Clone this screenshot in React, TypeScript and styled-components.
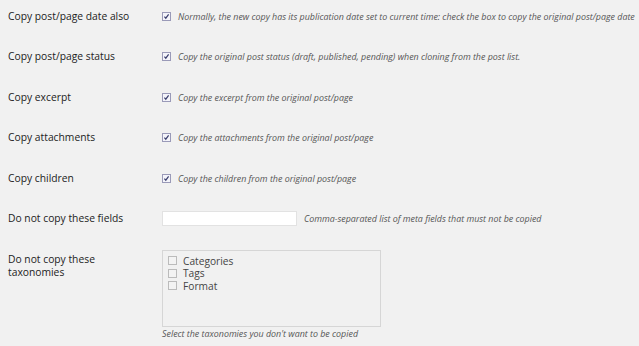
import styled, { createGlobalStyle } from "styled-components";

const GlobalStyle = createGlobalStyle`
  html, body {
    margin: 0;
    padding: 0;
    background: #f1f1f1;
  }
  body {
    font-family: "Open Sans", "DejaVu Sans", sans-serif;
    color: #222;
  }
`;

const Form = styled.div`
  padding: 9.5px 0 0 8px;
  width: 631px;
  height: 336.5px;
  overflow: hidden;
`;

const Row = styled.div<{ $tall?: boolean }>`
  display: flex;
  align-items: flex-start;
  height: ${(p) => (p.$tall ? "auto" : "40.6px")};
`;

const Label = styled.div`
  width: 154px;
  flex: none;
  font-size: 10.3px;
  line-height: 13px;
  color: #222;
`;

const Field = styled.div`
  display: flex;
  align-items: center;
  gap: 7px;
  height: 13px;
`;

const Box = styled.span<{ $checked?: boolean }>`
  display: inline-flex;
  align-items: center;
  justify-content: center;
  width: 9px;
  height: 9px;
  box-sizing: border-box;
  border: 1px solid ${(p) => (p.$checked ? "#9a9ab8" : "#bbb")};
  background: ${(p) => (p.$checked ? "#f4f4fa" : "#f3f3f3")};
  flex: none;
`;

const Desc = styled.span`
  font-style: italic;
  font-size: 8.9px;
  line-height: 13px;
  color: #555;
  white-space: nowrap;
`;

const TextInput = styled.div`
  width: 135px;
  height: 15px;
  box-sizing: border-box;
  background: #fff;
  border: 1px solid #e2e2e2;
`;

const FieldCol = styled.div`
  display: flex;
  flex-direction: column;
  margin-top: -3.5px;
`;

const TaxBox = styled.div`
  width: 219px;
  height: 77px;
  box-sizing: border-box;
  border: 1px solid #d6d6d6;
  padding: 4px 0 0 5px;
`;

const TaxItem = styled.div`
  display: flex;
  align-items: center;
  gap: 6px;
  height: 12.5px;
  line-height: 12.5px;
  font-size: 10.2px;
  color: #444;
`;

const Caption = styled.div`
  font-style: italic;
  font-size: 8.9px;
  line-height: 12px;
  color: #555;
  margin-top: 1px;
`;

const Check = ({ checked }: { checked?: boolean }) => (
  <Box $checked={checked}>
    {checked && (
      <svg width="7" height="7" viewBox="0 0 7 7">
        <path d="M1.4 3.6 L2.8 5.2 L5.6 1.3" fill="none" stroke="#3b3f6e" strokeWidth="1.2" />
      </svg>
    )}
  </Box>
);

const options = [
  {
    label: "Copy post/page date also",
    text: "Normally, the new copy has its publication date set to current time: check the box to copy the original post/page date",
  },
  {
    label: "Copy post/page status",
    text: "Copy the original post status (draft, published, pending) when cloning from the post list.",
  },
  { label: "Copy excerpt", text: "Copy the excerpt from the original post/page" },
  { label: "Copy attachments", text: "Copy the attachments from the original post/page" },
  { label: "Copy children", text: "Copy the children from the original post/page" },
];

const taxonomies = ["Categories", "Tags", "Format"];

export default function App() {
  return (
    <>
      <GlobalStyle />
      <Form>
        {options.map((o) => (
          <Row key={o.label}>
            <Label>{o.label}</Label>
            <Field>
              <Check checked />
              <Desc>{o.text}</Desc>
            </Field>
          </Row>
        ))}
        <Row>
          <Label>Do not copy these fields</Label>
          <Field>
            <TextInput />
            <Desc>Comma-separated list of meta fields that must not be copied</Desc>
          </Field>
        </Row>
        <Row $tall>
          <Label>
            Do not copy these
            <br />
            taxonomies
          </Label>
          <FieldCol>
            <TaxBox>
              {taxonomies.map((t) => (
                <TaxItem key={t}>
                  <Check />
                  {t}
                </TaxItem>
              ))}
            </TaxBox>
            <Caption>Select the taxonomies you don't want to be copied</Caption>
          </FieldCol>
        </Row>
      </Form>
    </>
  );
}
